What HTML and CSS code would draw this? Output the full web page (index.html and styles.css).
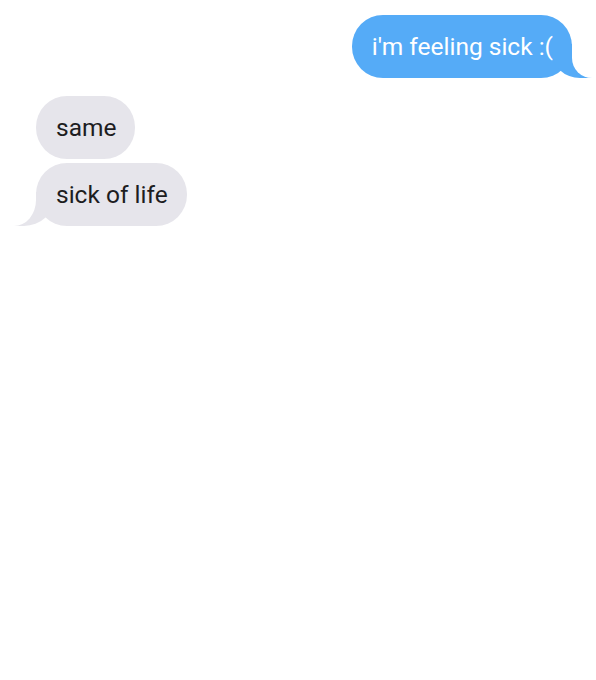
FILE: index.html
```html
<!DOCTYPE html>
<html lang="en">
<head>
<meta charset="UTF-8">
<title>Messages</title>
<link rel="stylesheet" href="styles.css">
</head>
<body>
<div class="chat">
    <p class="bubble sent tail">i'm feeling sick :(</p>
    <div class="group">
        <p class="bubble received">same</p>
        <p class="bubble received tail">sick of life</p>
    </div>
</div>
</body>
</html>
```

FILE: styles.css
```css
body {
    font-family: 'Roboto', 'Liberation Sans', sans-serif;
    background-color: #fff;
    margin: 0;
}
.chat {
    display: flex;
    flex-direction: column;
    padding: 15px 24px 0 36px;
}
.group {
    display: flex;
    flex-direction: column;
    align-items: flex-start;
    gap: 4px;
    margin-top: 18px;
}
.bubble {
    position: relative;
    margin: 0;
    padding: 18px 19px 18px 20px;
    font-size: 24.5px;
    line-height: 27px;
    border-radius: 31px;
}
.sent {
    align-self: flex-end;
    background-color: #55abf7;
    color: #fff;
}
.received {
    background-color: #e6e5eb;
    color: #1d1d1f;
}
.tail::before,
.tail::after {
    content: "";
    position: absolute;
    bottom: 0;
    height: 34px;
}
.sent.tail::before {
    right: -20px;
    width: 40px;
    background-color: #55abf7;
    border-bottom-left-radius: 28px 26px;
}
.sent.tail::after {
    right: -50px;
    width: 50px;
    background-color: #fff;
    border-bottom-left-radius: 20px;
}
.received.tail::before {
    left: -26px;
    width: 44px;
    background-color: #e6e5eb;
    border-bottom-right-radius: 30px 28px;
}
.received.tail::after {
    left: -50px;
    width: 50px;
    background-color: #fff;
    border-bottom-right-radius: 22px 26px;
}
```
